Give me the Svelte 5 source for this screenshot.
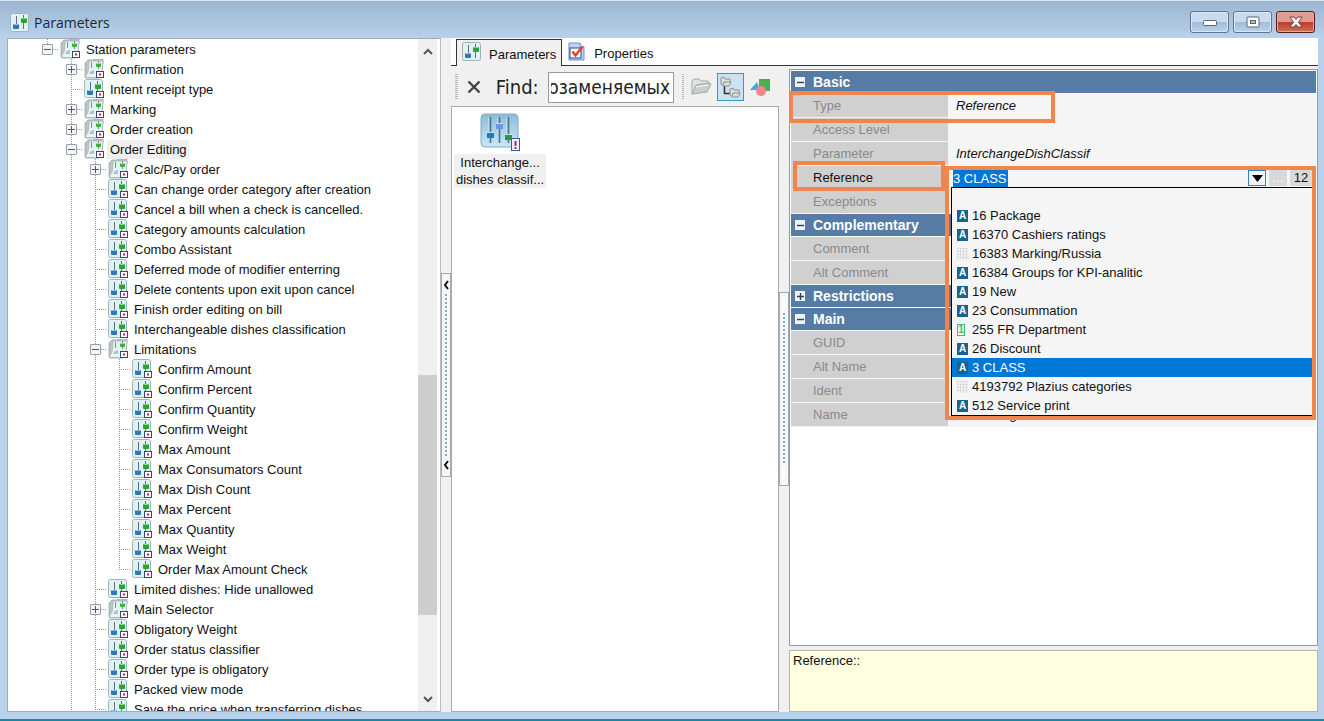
<script>
  import { onMount } from 'svelte';

  // level, label, kind (folder or item), open state of the folder
  const tree = [
    { level: 0, label: 'Station parameters', folder: true, open: true, last: true },
    { level: 1, label: 'Confirmation', folder: true },
    { level: 1, label: 'Intent receipt type' },
    { level: 1, label: 'Marking', folder: true },
    { level: 1, label: 'Order creation', folder: true },
    { level: 1, label: 'Order Editing', folder: true, open: true, selected: true },
    { level: 2, label: 'Calc/Pay order', folder: true },
    { level: 2, label: 'Can change order category after creation' },
    { level: 2, label: 'Cancel a bill when a check is cancelled.' },
    { level: 2, label: 'Category amounts calculation' },
    { level: 2, label: 'Combo Assistant' },
    { level: 2, label: 'Deferred mode of modifier enterring' },
    { level: 2, label: 'Delete contents upon exit upon cancel' },
    { level: 2, label: 'Finish order editing on bill' },
    { level: 2, label: 'Interchangeable dishes classification' },
    { level: 2, label: 'Limitations', folder: true, open: true },
    { level: 3, label: 'Confirm Amount' },
    { level: 3, label: 'Confirm Percent' },
    { level: 3, label: 'Confirm Quantity' },
    { level: 3, label: 'Confirm Weight' },
    { level: 3, label: 'Max Amount' },
    { level: 3, label: 'Max Consumators Count' },
    { level: 3, label: 'Max Dish Count' },
    { level: 3, label: 'Max Percent' },
    { level: 3, label: 'Max Quantity' },
    { level: 3, label: 'Max Weight' },
    { level: 3, label: 'Order Max Amount Check', last: true },
    { level: 2, label: 'Limited dishes: Hide unallowed' },
    { level: 2, label: 'Main Selector', folder: true },
    { level: 2, label: 'Obligatory Weight' },
    { level: 2, label: 'Order status classifier' },
    { level: 2, label: 'Order type is obligatory' },
    { level: 2, label: 'Packed view mode' },
    { level: 2, label: 'Save the price when transferring dishes' }
  ];

  const groups = [
    {
      name: 'Basic',
      open: true,
      rows: [
        { name: 'Type', value: 'Reference', marked: true },
        { name: 'Access Level', value: '' },
        { name: 'Parameter', value: 'InterchangeDishClassif' },
        { name: 'Reference', editor: true },
        { name: 'Exceptions', value: '' }
      ]
    },
    {
      name: 'Complementary',
      open: true,
      rows: [
        { name: 'Comment', value: '' },
        { name: 'Alt Comment', value: '' }
      ]
    },
    { name: 'Restrictions', open: false, rows: [] },
    {
      name: 'Main',
      open: true,
      rows: [
        { name: 'GUID', value: '' },
        { name: 'Alt Name', value: '' },
        { name: 'Ident', value: '' },
        { name: 'Name', value: 'Interchangeable dishes classification' }
      ]
    }
  ];

  const options = [
    { label: '16 Package', icon: 'a' },
    { label: '16370 Cashiers ratings', icon: 'a' },
    { label: '16383 Marking/Russia', icon: 'none' },
    { label: '16384 Groups for KPI-analitic', icon: 'a' },
    { label: '19 New', icon: 'a' },
    { label: '23 Consummation', icon: 'a' },
    { label: '255 FR Department', icon: 'one' },
    { label: '26 Discount', icon: 'a' },
    { label: '3 CLASS', icon: 'a' },
    { label: '4193792 Plazius categories', icon: 'none' },
    { label: '512 Service print', icon: 'a' }
  ];

  let reference = $state('3 CLASS');
  let search = $state('взаимозаменяемых');
  let searchBox;

  // keep the end of the search text in view
  onMount(() => {
    searchBox.scrollLeft = searchBox.scrollWidth;
  });
</script>

{#snippet sliders()}
  <rect x="0.5" y="0.5" width="18" height="18" rx="2" fill="#dff1f4" stroke="#9fb4b9" />
  <path d="M6.500 3v9M13.500 2v14" stroke="#5c707a" />
  <rect x="3" y="11" width="6" height="5" rx="1" fill="#2f78b4" />
  <path d="M3.500 11.500h5" stroke="#8fc2ea" />
  <rect x="11" y="5" width="6" height="5" rx="1" fill="#2aa336" />
  <path d="M11.500 5.500h5" stroke="#7fda7a" />
{/snippet}

{#snippet badge()}
  <rect x="12.500" y="12.500" width="7" height="6" fill="#fff" stroke="#31497f" />
  <rect x="15" y="14.500" width="2" height="2" fill="#d5145a" />
{/snippet}

{#snippet itemIcon()}
  <svg class="icon" viewBox="0 0 21 20" aria-hidden="true">
    {@render sliders()}
    {@render badge()}
  </svg>
{/snippet}

{#snippet folderIcon()}
  <svg class="icon" viewBox="0 0 21 20" aria-hidden="true">
    <path d="M1 18V4l3-3h5l1-1h9v3l-2 14-2 2H2z" fill="#b9c6c4" stroke="#98a8a6" stroke-width="0.800" />
    <path d="M5 2h14l-1 14H4z" fill="#e2f2ef" stroke="#a9b9b8" stroke-width="0.800" />
    <path d="M7.500 3v6M14.500 2v8" stroke="#7d9098" />
    <rect x="12" y="4" width="5" height="4" rx="1" fill="#3cb140" />
    <path d="M12.500 4.500h4" stroke="#a0e695" />
    <path d="M2 18l3-6 4-2 5 3-2 5z" fill="#eef4f4" />
    <path d="M5 15l2-3 3-1v4z" fill="#a5c3d3" />
    {@render badge()}
  </svg>
{/snippet}

<div class="window">
  <header class="titlebar">
    <svg class="app-icon" viewBox="0 0 19 19" aria-hidden="true">{@render sliders()}</svg>
    <h1>Parameters</h1>
    <div class="window-buttons">
      <button aria-label="Minimize">
        <svg width="14" height="10" viewBox="0 0 14 10"><rect x="0.500" y="3.500" width="13" height="5" rx="1" fill="#fff" stroke="#566577" /></svg>
      </button>
      <button aria-label="Maximize">
        <svg width="14" height="12" viewBox="0 0 14 12"><rect x="1" y="1" width="12" height="10" rx="1" fill="#fff" stroke="#566577" /><rect x="4.500" y="4.500" width="5" height="3" fill="#a8c0da" stroke="#566577" /></svg>
      </button>
      <button class="close" aria-label="Close">
        <svg width="14" height="12" viewBox="0 0 14 12"><path d="M1 1h4l2 2.500 2-2.500h4l-3.500 5 3.500 5h-4l-2-2.500-2 2.500h-4l3.500-5z" fill="#fff" stroke="#6c4145" /></svg>
      </button>
    </div>
  </header>

  <div class="body">
    <section class="tree-pane">
      <ul class="tree">
        {#each tree as node}
          <li>
            {#each Array(node.level) as _, i}
              <span class="guide" class:line={i > 0}></span>
            {/each}
            <span class="guide line own" class:last={node.last}>
              {#if node.folder}
                <button class="expander" aria-label={node.open ? 'Collapse' : 'Expand'}>
                  <svg width="9" height="9" viewBox="0 0 9 9"><path d={node.open ? 'M1 4.500h7' : 'M1 4.500h7M4.500 1v7'} stroke="#44568c" /></svg>
                </button>
              {/if}
            </span>
            {#if node.folder}{@render folderIcon()}{:else}{@render itemIcon()}{/if}
            <span class="label" class:selected={node.selected}>{node.label}</span>
          </li>
        {/each}
      </ul>
      <div class="scrollbar">
        <button aria-label="Scroll up"><svg width="10" height="7" viewBox="0 0 10 7"><path d="M1 6l4-4 4 4" fill="none" stroke="#555" stroke-width="2" /></svg></button>
        <div class="track"><div class="thumb"></div></div>
        <button aria-label="Scroll down"><svg width="10" height="7" viewBox="0 0 10 7"><path d="M1 1l4 4 4-4" fill="none" stroke="#555" stroke-width="2" /></svg></button>
      </div>
    </section>

    <div class="splitter">
      <div class="grip left">
        <svg width="6" height="10" viewBox="0 0 6 10"><path d="M5 1L2 5l3 4" fill="none" stroke="#111" stroke-width="2" /></svg>
        <span class="dots"></span>
        <svg width="6" height="10" viewBox="0 0 6 10"><path d="M5 1L2 5l3 4" fill="none" stroke="#111" stroke-width="2" /></svg>
      </div>
    </div>

    <main>
      <nav class="tabs">
        <button class="tab active">
          <svg class="tab-icon" viewBox="0 0 19 19" aria-hidden="true">{@render sliders()}</svg>
          Parameters
        </button>
        <button class="tab">
          <svg class="tab-icon" viewBox="0 0 19 19" aria-hidden="true">
            <path d="M2 1h11l4 4v13H2z" fill="#b9d3f3" stroke="#6d92c8" />
            <path d="M13 1v4h4" fill="#fff" stroke="#6d92c8" />
            <rect x="3" y="6" width="11" height="10" fill="#fff" stroke="#31497f" />
            <path d="M5.500 9.500l3 4 7-9" fill="none" stroke="#e0412d" stroke-width="2.400" />
          </svg>
          Properties
        </button>
      </nav>

      <div class="content">
        <section class="list-pane">
          <div class="toolbar">
            <span class="handle"></span>
            <button class="clear" aria-label="Clear search">
              <svg width="14" height="14" viewBox="0 0 14 14"><path d="M1.500 1.500l11 11M12.500 1.500l-11 11" stroke="#444" stroke-width="2.400" /></svg>
            </button>
            <label for="find">Find:</label>
            <input id="find" type="text" bind:value={search} bind:this={searchBox} />
            <span class="handle second"></span>
            <button class="tool" aria-label="Open folder">
              <svg width="22" height="20" viewBox="0 0 22 20">
                <path d="M2 17V4l2-2h5l2 2h7v3" fill="#dfe4e2" stroke="#a3aaa8" />
                <path d="M2 17L6 8l13-2 2 1-4 8z" fill="#c6cfcc" stroke="#a3aaa8" />
                <path d="M6 10l12-2" stroke="#fff" />
              </svg>
            </button>
            <button class="tool pressed" aria-label="Folder tree">
              <svg width="22" height="22" viewBox="0 0 22 22">
                <path d="M5.500 8v9.500h6" fill="none" stroke="#333" stroke-width="1.600" />
                <path d="M2 8V2l3-1 1 2h5v2l1 1-2 4H4z" fill="#dbe1df" stroke="#87908f" />
                <path d="M4 9l1-3h7" fill="none" stroke="#87908f" />
                <path d="M11 19v-6l3-1 1 2h5v2l1 1-2 4h-6z" fill="#dbe1df" stroke="#87908f" />
                <path d="M13 20l1-3h7" fill="none" stroke="#87908f" />
              </svg>
            </button>
            <button class="tool" aria-label="Object types">
              <svg width="20" height="19" viewBox="0 0 20 19">
                <path d="M0 12l7-8 3 8z" fill="#4aa3df" />
                <rect x="9" y="1" width="11" height="12" fill="#4cae50" />
                <circle cx="11" cy="13" r="5" fill="#fa828b" />
              </svg>
            </button>
          </div>
          <div class="list">
            <button class="tile">
              <svg width="40" height="38" viewBox="0 0 40 38" aria-hidden="true">
                <defs>
                  <linearGradient id="tile-bg" x1="0" y1="0" x2="0" y2="1">
                    <stop offset="0" stop-color="#8dbbd8" />
                    <stop offset="1" stop-color="#c8e8f8" />
                  </linearGradient>
                </defs>
                <rect x="1" y="1" width="37" height="33" rx="4" fill="url(#tile-bg)" stroke="#7daac5" />
                <path d="M10.500 4v26M19.500 4v26M28.500 4v26" stroke="#4f7389" stroke-width="1.600" />
                <path d="M8.500 5v25M17.500 5v25M26.500 5v25" stroke="#b9dcec" />
                <rect x="7" y="19" width="7" height="6" fill="#2675bd" />
                <rect x="16" y="10" width="7" height="6" fill="#6f93dc" />
                <rect x="25" y="21" width="7" height="6" fill="#249b3b" />
                <path d="M7 19.500h7M16 10.500h7M25 21.500h7" stroke="#c2e2f4" />
                <rect x="31.500" y="25.500" width="8" height="12" fill="#f4eefa" stroke="#315f91" />
                <path d="M35.500 28v5M35.500 34v2" stroke="#b0286c" stroke-width="2" />
              </svg>
              <span>Interchange...<br />dishes classif...</span>
            </button>
          </div>
        </section>

        <div class="splitter">
          <div class="grip right">
            <svg width="6" height="10" viewBox="0 0 6 10"><path d="M1 1l3 4-3 4" fill="none" stroke="#fff" stroke-width="2" /></svg>
            <span class="dots"></span>
            <svg width="6" height="10" viewBox="0 0 6 10"><path d="M1 1l3 4-3 4" fill="none" stroke="#fff" stroke-width="2" /></svg>
          </div>
        </div>

        <section class="inspector">
          <div class="grid">
            {#each groups as group}
              <div class="group">
                <button class="box" aria-label={group.open ? 'Collapse' : 'Expand'}>
                  <svg width="9" height="9" viewBox="0 0 9 9"><path d={group.open ? 'M1 4.500h7' : 'M1 4.500h7M4.500 1v7'} stroke="#27405f" stroke-width="1.400" /></svg>
                </button>
                {group.name}
              </div>
              {#each group.rows as row}
                <div class="row" class:marked={row.marked} class:current={row.editor}>
                  <div class="name">{row.name}</div>
                  {#if row.editor}
                    <div class="editor">
                      <input type="text" aria-label="Reference" bind:value={reference} />
                      <button class="drop" aria-label="Show list">
                        <svg width="11" height="7" viewBox="0 0 11 7"><path d="M0 0h11L5.500 7z" fill="#000" /></svg>
                      </button>
                      <button class="more" aria-label="More"><span>...</span></button>
                      <button class="count">12</button>
                      <ul class="options">
                        <li class="blank"></li>
                        {#each options as option}
                          <li class:chosen={option.label === reference}>
                            <span class="mark {option.icon}">{option.icon === 'a' ? 'A' : option.icon === 'one' ? '1' : ''}</span>
                            {option.label}
                          </li>
                        {/each}
                      </ul>
                    </div>
                  {:else}
                    <div class="value">{row.value}</div>
                  {/if}
                </div>
              {/each}
            {/each}
          </div>
          <div class="hint">Reference::</div>
        </section>
      </div>
    </main>
  </div>
</div>

<style>
  :global(body) {
    margin: 0;
  }

  .window {
    box-sizing: border-box;
    display: flex;
    flex-direction: column;
    height: 100vh;
    padding: 0 6px 7px 7px;
    border-bottom: 2px solid #168aa0;
    background: linear-gradient(#9ab4d0, #b9d1ea 38px);
    box-shadow: inset 0 1px #dbe8f4;
    color: #111;
    font: 13px/20px "Liberation Sans", Arial, sans-serif;
  }

  button {
    padding: 0;
    border: 0;
    background: none;
    color: inherit;
    font: inherit;
  }

  svg {
    display: block;
    flex: none;
  }

  .titlebar {
    display: flex;
    align-items: center;
    height: 38px;
    flex: none;
  }

  .app-icon {
    width: 19px;
    height: 19px;
    margin: 6px 5px 0 3px;
  }

  h1 {
    flex: 1;
    margin: 8px 0 0;
    color: #1c2733;
    font: 14px/20px "Open Sans", sans-serif;
  }

  .window-buttons {
    display: flex;
    gap: 4px;
    margin: 6px 3px 0 0;
  }

  .window-buttons button {
    display: grid;
    place-items: center;
    width: 39px;
    height: 22px;
    border: 1px solid #61758d;
    border-radius: 3px;
    background: linear-gradient(#c9dbed 48%, #a2bdd9 52%, #b9d3ec);
    box-shadow: inset 0 0 0 1px #dbe8f4;
  }

  .window-buttons .close {
    border-color: #591b20;
    background: linear-gradient(#df9c8e 48%, #be3c28 52%, #d07058);
    box-shadow: inset 0 0 0 1px #e8a699;
  }

  .body {
    display: grid;
    grid-template-columns: 434fr 10px 867fr;
    flex: 1;
    min-height: 0;
    background: #f0f0f0;
  }

  /* tree */
  .tree-pane {
    display: flex;
    min-width: 0;
    overflow: hidden;
    border: 1px solid #a5acb5;
    border-right-color: #b8bcc4;
    background: #fff;
  }

  .tree {
    flex: 1;
    min-width: 0;
    margin: 0;
    padding: 0 0 0 27px;
    overflow: hidden;
    list-style: none;
    white-space: nowrap;
  }

  .tree li {
    display: flex;
    align-items: center;
    height: 20px;
  }

  .guide {
    display: grid;
    place-items: center;
    width: 24px;
    height: 20px;
    flex: none;
  }

  .line {
    background: repeating-linear-gradient(#999 0 1px, transparent 1px 2px) 12px 0 / 1px 100% no-repeat;
  }

  .own {
    background:
      repeating-linear-gradient(#999 0 1px, transparent 1px 2px) 12px 0 / 1px 100% no-repeat,
      repeating-linear-gradient(90deg, #999 0 1px, transparent 1px 2px) 12px 10px / 12px 1px no-repeat;
  }

  .own.last {
    background-size: 1px 10px, 12px 1px;
  }

  .expander {
    display: grid;
    place-items: center;
    width: 11px;
    height: 11px;
    border: 1px solid #969da8;
    border-radius: 1px;
    background: #f5f5f5;
  }

  .icon {
    width: 21px;
    height: 20px;
    margin-left: 1px;
  }

  .label {
    margin-left: 2px;
    padding: 1px 2px 0 3px;
    line-height: 18px;
  }

  .label.selected {
    background: #efefef;
  }

  .scrollbar {
    display: flex;
    flex-direction: column;
    width: 19px;
    margin-right: 3px;
    background: #f0f0f0;
  }

  .scrollbar button {
    display: grid;
    place-items: center;
    height: 24px;
  }

  .track {
    display: flex;
    flex: 1;
    flex-direction: column;
  }

  .track::before {
    flex: 312;
    content: "";
  }

  .track::after {
    flex: 72;
    content: "";
  }

  .thumb {
    flex: 240;
    background: #cdcdcd;
  }

  /* splitters */
  .splitter {
    display: flex;
    align-items: center;
  }

  .grip {
    box-sizing: border-box;
    display: flex;
    flex-direction: column;
    align-items: center;
    justify-content: space-between;
    width: 10px;
    height: 204px;
    padding: 6px 0;
    border: 1px solid #a8a8a8;
    background: #f5f7f9;
  }

  .grip.right {
    height: 194px;
  }

  .dots {
    flex: 1;
    width: 2px;
    margin: 4px 0;
    background: repeating-linear-gradient(#86abd0 0 2px, transparent 2px 4px);
  }

  /* tabs */
  main {
    display: flex;
    flex-direction: column;
    min-width: 0;
    min-height: 0;
  }

  .tabs {
    display: flex;
    height: 28px;
    flex: none;
    padding-left: 5px;
    background: linear-gradient(#333, #333) bottom / 100% 1px no-repeat #fff;
  }

  .tab {
    display: flex;
    align-items: center;
    gap: 8px;
    height: 27px;
    padding: 5px 5px 0 5px;
  }

  .tab.active {
    margin-top: 1px;
    padding-top: 3px;
    border: 1px solid #333;
    border-bottom: 0;
    background: #f0f0f0;
  }

  .tab-icon {
    width: 19px;
    height: 19px;
    margin-bottom: 6px;
  }

  .content {
    display: grid;
    grid-template-columns: 328fr 10px 529fr;
    flex: 1;
    min-height: 0;
  }

  /* list */
  .list-pane {
    display: flex;
    flex-direction: column;
    min-width: 0;
  }

  .toolbar {
    display: flex;
    align-items: center;
    height: 40px;
    flex: none;
    padding: 2px 6px 0 4px;
    box-sizing: border-box;
  }

  .handle {
    width: 3px;
    height: 26px;
    background: repeating-linear-gradient(#b4b4b4 0 1px, transparent 1px 2px);
  }

  .handle.second {
    margin-left: 8px;
  }

  .clear {
    margin: 0 15px 0 9px;
  }

  .toolbar label {
    width: 45px;
    color: #222;
    font: 20px/28px "DejaVu Sans Condensed", "Open Sans", sans-serif;
  }

  #find {
    box-sizing: border-box;
    width: 126px;
    height: 31px;
    margin-left: 9px;
    padding: 0 2px;
    border: 1px solid #999;
    background: #fff;
    color: #222;
    font: 19px/28px "DejaVu Sans Condensed", "Open Sans", sans-serif;
  }

  .tool {
    display: grid;
    place-items: center;
    width: 28px;
    height: 28px;
    margin-left: 3px;
  }

  .tool.pressed {
    box-sizing: border-box;
    border: 1px solid #3d94cf;
    background: #cbe2f5;
  }

  .list {
    flex: 1;
    border: 1px solid #a5acb5;
    background: #fff;
  }

  .tile {
    display: flex;
    flex-direction: column;
    align-items: center;
    gap: 3px;
    margin: 6px 0 0 2px;
    line-height: 17px;
  }

  .tile span {
    padding: 0 2px;
    background: #f0f0f0;
  }

  /* property grid */
  .inspector {
    display: flex;
    flex-direction: column;
    gap: 4px;
    min-width: 0;
    padding-top: 3px;
  }

  .grid {
    flex: 1;
    padding: 1px;
    border: 1px solid #9199a5;
    background: #fff;
  }

  .group {
    box-sizing: border-box;
    display: flex;
    align-items: center;
    gap: 8px;
    height: 23px;
    padding-left: 4px;
    border-bottom: 1px solid #fff;
    background: #567ca5;
    color: #fff;
    font-size: 14px;
    font-weight: bold;
  }

  .box {
    display: grid;
    place-items: center;
    width: 10px;
    height: 10px;
    background: #eef2f6;
  }

  .row {
    position: relative;
    display: flex;
    height: 24px;
    line-height: 23px;
  }

  .name {
    box-sizing: border-box;
    width: 157px;
    flex: none;
    padding-left: 22px;
    border-bottom: 1px solid #f5f5f5;
    background: #d0d0d0;
    color: #8a8a8a;
  }

  .value {
    flex: 1;
    min-width: 0;
    padding-left: 8px;
    overflow: hidden;
    background: #f5f5f5;
    font-style: italic;
    white-space: nowrap;
  }

  .marked::after {
    position: absolute;
    z-index: 1;
    top: -3px;
    left: -2px;
    width: 258px;
    height: 24px;
    border: 4px solid #f0864e;
    content: "";
  }

  .current .name {
    color: #111;
  }

  .current .name::after {
    position: absolute;
    z-index: 1;
    top: -5px;
    left: 2px;
    width: 144px;
    height: 22px;
    border: 4px solid #f0864e;
    content: "";
  }

  /* frame round the open editor and its list */
  .editor {
    position: relative;
    display: flex;
    align-items: center;
    flex: 1;
    gap: 3px;
    min-width: 0;
    padding: 0 4px 0 5px;
    background: #f5f5f5;
  }

  .editor::after {
    position: absolute;
    z-index: 2;
    top: 0;
    right: 0;
    left: -3px;
    height: 246px;
    border: 4px solid #f0864e;
    content: "";
    pointer-events: none;
  }

  .editor input {
    width: 55px;
    height: 17px;
    margin-right: auto;
    padding: 0;
    border: 0;
    background: #0078d7;
    color: #fff;
    font: inherit;
    line-height: 17px;
  }

  .editor button {
    box-sizing: border-box;
    display: grid;
    place-items: center;
    width: 18px;
    height: 16px;
    background: #d9d9d9;
    line-height: 16px;
  }

  .editor .drop {
    border: 1px solid #2b84cc;
    background: #eef5fb;
  }

  .editor .more {
    color: #fff;
    line-height: 8px;
  }

  .editor .count {
    width: 22px;
  }

  .options {
    position: absolute;
    z-index: 1;
    top: 21px;
    right: 3px;
    left: 3px;
    margin: 0;
    padding: 0;
    border: 1px solid #000;
    background: #f5f5f5;
    line-height: 19px;
    list-style: none;
  }

  .options li {
    display: flex;
    align-items: center;
    gap: 4px;
    height: 19px;
    padding-left: 5px;
  }

  .options .blank {
    height: 18px;
  }

  .options .chosen {
    background: #0078d7;
    color: #fff;
  }

  .mark {
    width: 11px;
    height: 12px;
    font-size: 10px;
    font-weight: bold;
    line-height: 12px;
    text-align: center;
  }

  .mark.a {
    background: #17658f;
    color: #fff;
  }

  .mark.one {
    box-sizing: border-box;
    width: 8px;
    margin-right: 3px;
    border: 1px solid #3dbd6e;
    color: #3dbd6e;
    line-height: 10px;
  }

  .mark.none {
    background:
      repeating-linear-gradient(#dcdcdc 0 1px, transparent 1px 3px),
      repeating-linear-gradient(90deg, #dcdcdc 0 1px, transparent 1px 3px);
  }

  .hint {
    height: 60px;
    flex: none;
    padding: 0 3px;
    border: 1px solid #b5b5a8;
    background: #ffffe1;
    line-height: 20px;
  }
</style>
